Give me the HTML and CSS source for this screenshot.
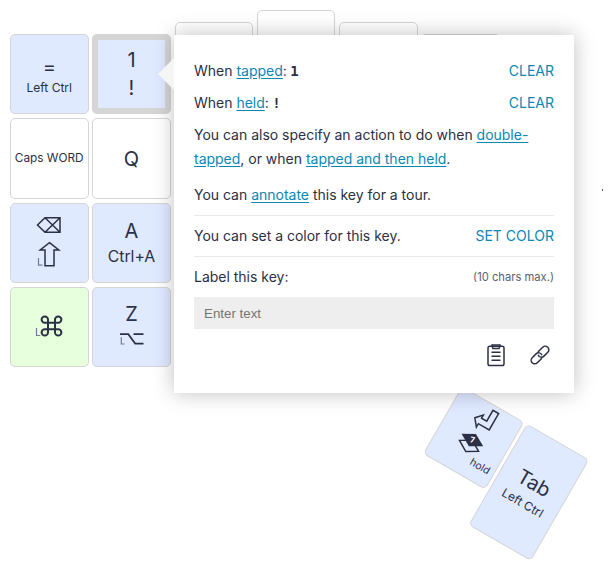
FILE: index.html
```html
<!DOCTYPE html>
<html lang="en">
<head>
<meta charset="utf-8">
<title>Keyboard layout</title>
<link rel="stylesheet" href="styles.css">
</head>
<body>
<main class="keyboard">
  <div class="column">
    <div class="key blue"><span class="big equals">=</span><span class="small lower">Left Ctrl</span></div>
    <div class="key"><span class="small caps">Caps WORD</span></div>
    <div class="key blue stack">
      <svg width="26" height="18" viewBox="0 0 26 18"><path d="M1.5 9 9 1.8H24V16.2H9ZM9 1.8 24 16.2M24 1.8 9 16.2"/></svg>
      <svg width="24" height="28" viewBox="0 0 24 28"><path d="M12.5 1.7 21.8 9H17V24.7H8V9H3.2Z"/><path class="side" d="M1.5 17v7.2H5.5"/></svg>
    </div>
    <div class="key green">
      <svg class="icon-command" width="28" height="24" viewBox="0 0 28 24"><path class="heavy" d="M13 8.8H20V15.2H13ZM13 8.8H9.8A3.2 3.2 0 1 1 13 5.6V8.8M20 8.8V5.6A3.2 3.2 0 1 1 23.2 8.8H20M20 15.2H23.2A3.2 3.2 0 1 1 20 18.4V15.2M13 15.2V18.4A3.2 3.2 0 1 1 9.8 15.2H13"/><path class="side" d="M1.5 14v7.5H5.3"/></svg>
    </div>
  </div>
  <div class="column">
    <div class="key blue selected"><span class="big">1</span><span class="big">!</span></div>
    <div class="key"><span class="big queue">Q</span></div>
    <div class="key blue"><span class="big">A</span><span class="medium">Ctrl+A</span></div>
    <div class="key blue option"><span class="big">Z</span>
      <svg width="26" height="24" viewBox="0 0 26 24"><path class="bar" d="M1 6.2H9.3L16.2 15.6H24.5M14.5 6.2H24.5"/><path class="side" d="M2.3 9.3v6.7H5.5"/></svg>
    </div>
  </div>
  <div class="column ring"><div class="key"></div></div>
  <div class="column middle"><div class="key"></div></div>
  <div class="column ring"><div class="key"></div></div>
  <div class="column"><div class="key dim"></div></div>
</main>

<div class="thumbs">
  <div class="key blue thumb-small">
    <svg width="28" height="28" viewBox="0 0 28 28"><path d="M5 18 11 11.3V15H17V2.5H23.5V21.3H11V25.3Z"/></svg>
    <div class="layer"><svg width="28" height="24" viewBox="0 0 28 24"><path d="M14 8.7 25 15.2 14 21.7 3 15.2Z"/><path class="fill" d="M14 1.5 26.5 8.5 14 15.5 1.5 8.5Z"/></svg><b>7</b></div>
    <span class="hold">hold</span>
  </div>
  <div class="key blue thumb-tall"><span class="big">Tab</span><span class="small">Left Ctrl</span></div>
</div>

<section class="popup">
  <div class="row"><span>When <a>tapped</a>: <code>1</code></span><a class="action">CLEAR</a></div>
  <div class="row"><span>When <a>held</a>: <code>!</code></span><a class="action">CLEAR</a></div>
  <p>You can also specify an action to do when <a>double-tapped</a>, or when <a>tapped and then held</a>.</p>
  <p class="tour">You can <a>annotate</a> this key for a tour.</p>
  <div class="row divided"><span>You can set a color for this key.</span><a class="action">SET COLOR</a></div>
  <div class="row label"><span>Label this key:</span><small>(10 chars max.)</small></div>
  <input type="text" placeholder="Enter text">
  <div class="tools">
    <svg width="18" height="23" viewBox="0 0 18 23"><rect x="1" y="2.2" width="16" height="19.3" rx="1.8"/><path d="M5 2.2V1H13V2.2L12 4.5H6ZM4.5 8.2H13.5M4.5 12.2H13.5M4.5 16.2H13.5"/></svg>
    <svg width="20" height="20" viewBox="0 0 20 20"><g transform="rotate(-45 10 10)"><path d="M9.5 13.2A3.6 3.6 0 0 1 8 13.6H2.6A3.6 3.6 0 0 1 2.6 6.4H8A3.6 3.6 0 0 1 11.3 11.5M10.5 6.8A3.6 3.6 0 0 1 12 6.4H17.4A3.6 3.6 0 0 1 17.4 13.6H12A3.6 3.6 0 0 1 8.7 8.5"/></g></svg>
  </div>
</section>
<i class="speck"></i>
</body>
</html>
```
FILE: styles.css
```css
* { box-sizing: border-box; }
body {
  margin: 0;
  width: 612px;
  height: 568px;
  position: relative;
  overflow: hidden;
  background: #fff;
  color: #2b3044;
  font-family: Inter, "Liberation Sans", sans-serif;
}
svg { display: block; flex: none; overflow: visible; fill: none; stroke: #2b3044; stroke-width: 1.5; }
svg .side { stroke: #777d90; stroke-width: 1.2; }
svg .heavy { stroke-width: 2; }
svg .bar { stroke-width: 1.7; }
svg .fill { fill: #2b3044; stroke: none; }
.keyboard { display: flex; gap: 3.75px; padding: 34px 0 0 10px; }
.column { display: flex; flex-direction: column; gap: 4px; }
.ring { margin-top: -12px; }
.middle { margin-top: -24px; }
.key {
  width: 78.5px;
  height: 80.3px;
  flex: none;
  border: 1px solid #d5d5d5;
  border-radius: 5px;
  background: #fff;
  display: flex;
  flex-direction: column;
  align-items: center;
  justify-content: center;
}
.blue { background: #dfe9ff; }
.green { background: #e8ffdd; }
.selected { border: 6px solid #d5d5d5; }
.dim { background: #d5d5d5; }
.option { padding-bottom: 3px; }
.big { font-size: 20px; line-height: 28px; }
.equals { line-height: 22px; padding-top: 4px; }
.queue { padding-top: 2px; }
.small { font-size: 12px; line-height: 18px; white-space: nowrap; }
.lower { padding-top: 1px; }
.caps { font-size: 11.8px; }
.medium { font-size: 15.8px; line-height: 24px; }
.stack { gap: 7px; }
.icon-command { margin-bottom: 3px; }
.thumbs {
  position: absolute;
  left: 422.5px;
  top: 415px;
  width: 146.7px;
  height: 116.5px;
  display: flex;
  gap: 3.7px;
  align-items: flex-start;
  transform: rotate(30deg);
}
.thumb-small { width: 71.5px; height: 77.6px; justify-content: flex-start; padding-top: 2px; }
.thumb-tall { width: 71.5px; height: 116.5px; }
.thumb-tall .big { line-height: 22px; }
.thumb-tall .small { padding-top: 3px; }
.layer { position: relative; margin-top: 2px; }
.layer b {
  position: absolute;
  left: 10px;
  top: 4px;
  width: 8px;
  font: bold 8px/9px Inter, sans-serif;
  text-align: center;
  color: #fff;
  transform: rotate(-20deg);
}
.hold { font-size: 10.5px; line-height: 14px; align-self: flex-end; margin: -3px 4px 0 0; }
.popup {
  position: absolute;
  left: 174px;
  top: 35px;
  width: 400px;
  height: 358px;
  padding: 24px 20px;
  background: #fff;
  box-shadow: 0 0 20px rgba(0, 0, 0, .25);
  font-size: 14px;
  line-height: 24px;
}
.popup::before {
  content: "";
  position: absolute;
  left: -16px;
  top: 23px;
  border: 16px solid transparent;
  border-left: 0;
  border-right-color: #f5f5f5;
}
.row { display: flex; justify-content: space-between; margin-bottom: 8px; }
.row > span, .popup p { letter-spacing: -.01px; }
.popup p { margin: 0 0 12px; }
.popup .tour { margin-bottom: 8px; }
.popup a { color: #0a87b5; text-decoration: underline; text-underline-offset: 2px; }
.popup .action { text-decoration: none; }
code { font: bold 14px/1 "DejaVu Sans Mono", monospace; margin-left: -.5px; }
.divided { border: solid #eaeaea; border-width: 1px 0; padding: 8px 0; }
small { font-size: 11.2px; color: #5d6070; }
input {
  display: block;
  width: 100%;
  height: 32px;
  border: 0;
  padding: 0 10px;
  background: #eee;
  font: 13.33px "Liberation Sans", sans-serif;
}
input::placeholder { color: #757575; }
.tools { display: flex; gap: 25px; align-items: center; justify-content: flex-end; padding: 14.5px 4px 0 0; }
.speck { position: absolute; left: 602px; top: 189px; width: 1px; height: 2px; background: #555; }
```
